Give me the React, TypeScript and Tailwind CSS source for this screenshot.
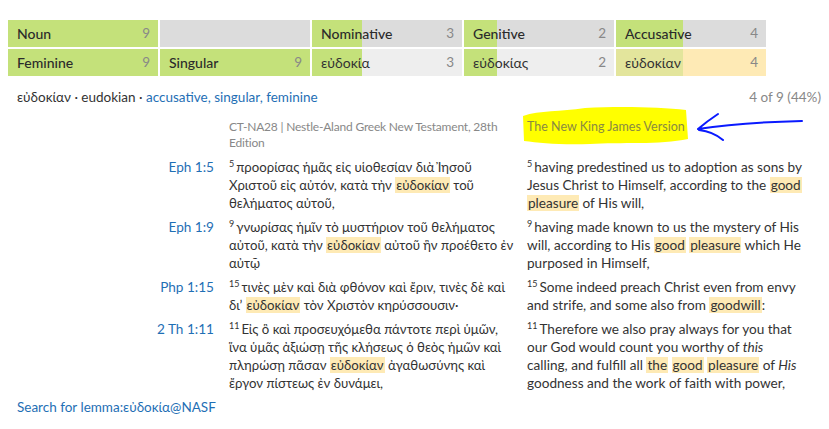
const FONT = "font-['Lato','Noto_Sans',sans-serif]";

const HL = ({ children }: { children: React.ReactNode }) => (
  <span className="bg-[#feeab5] px-[1px]">{children}</span>
);

const Sup = ({ n }: { n: string }) => (
  <span className="relative -top-[5px] mr-[2px] text-[9px] leading-none">{n}</span>
);

type Cell = {
  label?: string;
  count?: number;
  pct: number;
  fill: string;
  rest: string;
  greek?: boolean;
};

const TOP: Cell[] = [
  { label: "Noun", count: 9, pct: 100, fill: "#c4e17a", rest: "#dcdcdc" },
  { pct: 0, fill: "#c4e17a", rest: "#dcdcdc" },
  { label: "Nominative", count: 3, pct: 33.3, fill: "#c4e17a", rest: "#dcdcdc" },
  { label: "Genitive", count: 2, pct: 22.2, fill: "#c4e17a", rest: "#dcdcdc" },
  { label: "Accusative", count: 4, pct: 44.4, fill: "#c4e17a", rest: "#dcdcdc" },
];

const BOTTOM: Cell[] = [
  { label: "Feminine", count: 9, pct: 100, fill: "#c4e17a", rest: "#eeeeee" },
  { label: "Singular", count: 9, pct: 100, fill: "#c4e17a", rest: "#eeeeee" },
  { label: "εὐδοκία", count: 3, pct: 33.3, fill: "#c4e17a", rest: "#eeeeee", greek: true },
  { label: "εὐδοκίας", count: 2, pct: 22.2, fill: "#c4e17a", rest: "#eeeeee", greek: true },
  { label: "εὐδοκίαν", count: 4, pct: 44.4, fill: "#e3e59c", rest: "#feeab5", greek: true },
];

function Bar({ c }: { c: Cell }) {
  return (
    <div
      className="flex h-[27px] items-center justify-between pl-[9px] pr-[8px]"
      style={{
        background: `linear-gradient(to right, ${c.fill} ${c.pct}%, ${c.rest} ${c.pct}%)`,
      }}
    >
      <span className={c.greek ? "text-[14px] text-[#333]" : "text-[14px] font-medium text-[#2b2b2b]"}>
        {c.label}
      </span>
      {c.count !== undefined && (
        <span className="text-[13.5px] text-[#888]">{c.count}</span>
      )}
    </div>
  );
}

const ROWS = [
  {
    ref: "Eph 1:5",
    greek: (
      <>
        <Sup n="5" />
        προορίσας ἡμᾶς εἰς υἱοθεσίαν διὰ Ἰησοῦ Χριστοῦ εἰς αὐτόν, κατὰ τὴν{" "}
        <HL>εὐδοκίαν</HL> τοῦ θελήματος αὐτοῦ,
      </>
    ),
    eng: (
      <>
        <Sup n="5" />
        having predestined us to adoption as sons by Jesus Christ to Himself, according to the{" "}
        <HL>good</HL> <HL>pleasure</HL> of His will,
      </>
    ),
  },
  {
    ref: "Eph 1:9",
    greek: (
      <>
        <Sup n="9" />
        γνωρίσας ἡμῖν τὸ μυστήριον τοῦ θελήματος αὐτοῦ, κατὰ τὴν <HL>εὐδοκίαν</HL>{" "}
        αὐτοῦ ἣν προέθετο ἐν αὐτῷ
      </>
    ),
    eng: (
      <>
        <Sup n="9" />
        having made known to us the mystery of His will, according to His <HL>good</HL>{" "}
        <HL>pleasure</HL> which He purposed in Himself,
      </>
    ),
  },
  {
    ref: "Php 1:15",
    greek: (
      <>
        <Sup n="15" />
        τινὲς μὲν καὶ διὰ φθόνον καὶ ἔριν, τινὲς δὲ καὶ δι’ <HL>εὐδοκίαν</HL> τὸν
        Χριστὸν κηρύσσουσιν·
      </>
    ),
    eng: (
      <>
        <Sup n="15" />
        Some indeed preach Christ even from envy and strife, and some also from{" "}
        <HL>goodwill</HL>:
      </>
    ),
  },
  {
    ref: "2 Th 1:11",
    greek: (
      <>
        <Sup n="11" />
        Εἰς ὃ καὶ προσευχόμεθα πάντοτε περὶ ὑμῶν, ἵνα ὑμᾶς ἀξιώσῃ τῆς κλήσεως ὁ θεὸς
        ἡμῶν καὶ πληρώσῃ πᾶσαν <HL>εὐδοκίαν</HL> ἀγαθωσύνης καὶ ἔργον πίστεως ἐν
        δυνάμει,
      </>
    ),
    eng: (
      <>
        <Sup n="11" />
        Therefore we also pray always for you that our God would count you worthy of{" "}
        <i>this</i> calling, and fulfill all <HL>the</HL> <HL>good</HL> <HL>pleasure</HL>{" "}
        of <i>His</i> goodness and the work of faith with power,
      </>
    ),
  },
];

export default function App() {
  return (
    <div className={`relative h-[429px] w-[829px] overflow-hidden bg-white text-[#333] ${FONT}`}>
      {/* hand-drawn annotation on the screenshot, sits under the text */}
      <svg className="pointer-events-none absolute left-0 top-0" width="829" height="429">
        <path
          d="M523 116 C540 110 560 112 585 108 C620 106 660 107 686 110 L688 139 C660 145 620 142 590 144 C560 145 540 143 524 141 Z"
          fill="#ffff00"
        />
        <path
          d="M698 129 C730 124 760 122 802 121 M698 129 C705 123 712 118 718 114 M699 130 C708 131 716 134 723 140"
          fill="none"
          stroke="#0a1aff"
          strokeWidth="2"
          strokeLinecap="round"
        />
      </svg>

      <div className="relative">
        <div className="grid grid-cols-[repeat(5,150px)] gap-[2px] pl-2 pt-5">
          {TOP.map((c, i) => (
            <Bar key={"t" + i} c={c} />
          ))}
          {BOTTOM.map((c, i) => (
            <Bar key={"b" + i} c={c} />
          ))}
        </div>

        <div className="mt-[12px] flex items-center justify-between pl-[17px] pr-[8px] text-[13.5px] leading-[18px]">
          <div>
            εὐδοκίαν · eudokian ·{" "}
            <span className="text-[#1f6fb5]">accusative, singular, feminine</span>
          </div>
          <div className="text-[#888]">4 of 9 (44%)</div>
        </div>

        <div className="mt-[13px] grid grid-cols-[197px_302px_289px] pl-[17px] text-[13.6px] leading-[18px]">
          <div />
          <div className="mb-[1px] pl-[15px] text-[12px] leading-[16px] tracking-[-0.2px] text-[#888]">
            CT-NA28 | Nestle-Aland Greek New Testament, 28th Edition
          </div>
          <div className="pl-[11px] text-[12.5px] leading-[16px] text-[#8a8a40]">
            The New King James Version
          </div>

          {ROWS.map((r) => (
            <div key={r.ref} className="contents">
              <div className="mt-[6px] text-right text-[#1f6fb5]">{r.ref}</div>
              <div className="mt-[6px] pl-[15px] text-[13.2px]">{r.greek}</div>
              <div className="mt-[6px] pl-[11px]">{r.eng}</div>
            </div>
          ))}
        </div>

        <div className="mt-[6px] pl-[17px] text-[13.5px] leading-[18px] text-[#1f6fb5]">
          Search for lemma:εὐδοκία@NASF
        </div>
      </div>
    </div>
  );
}
